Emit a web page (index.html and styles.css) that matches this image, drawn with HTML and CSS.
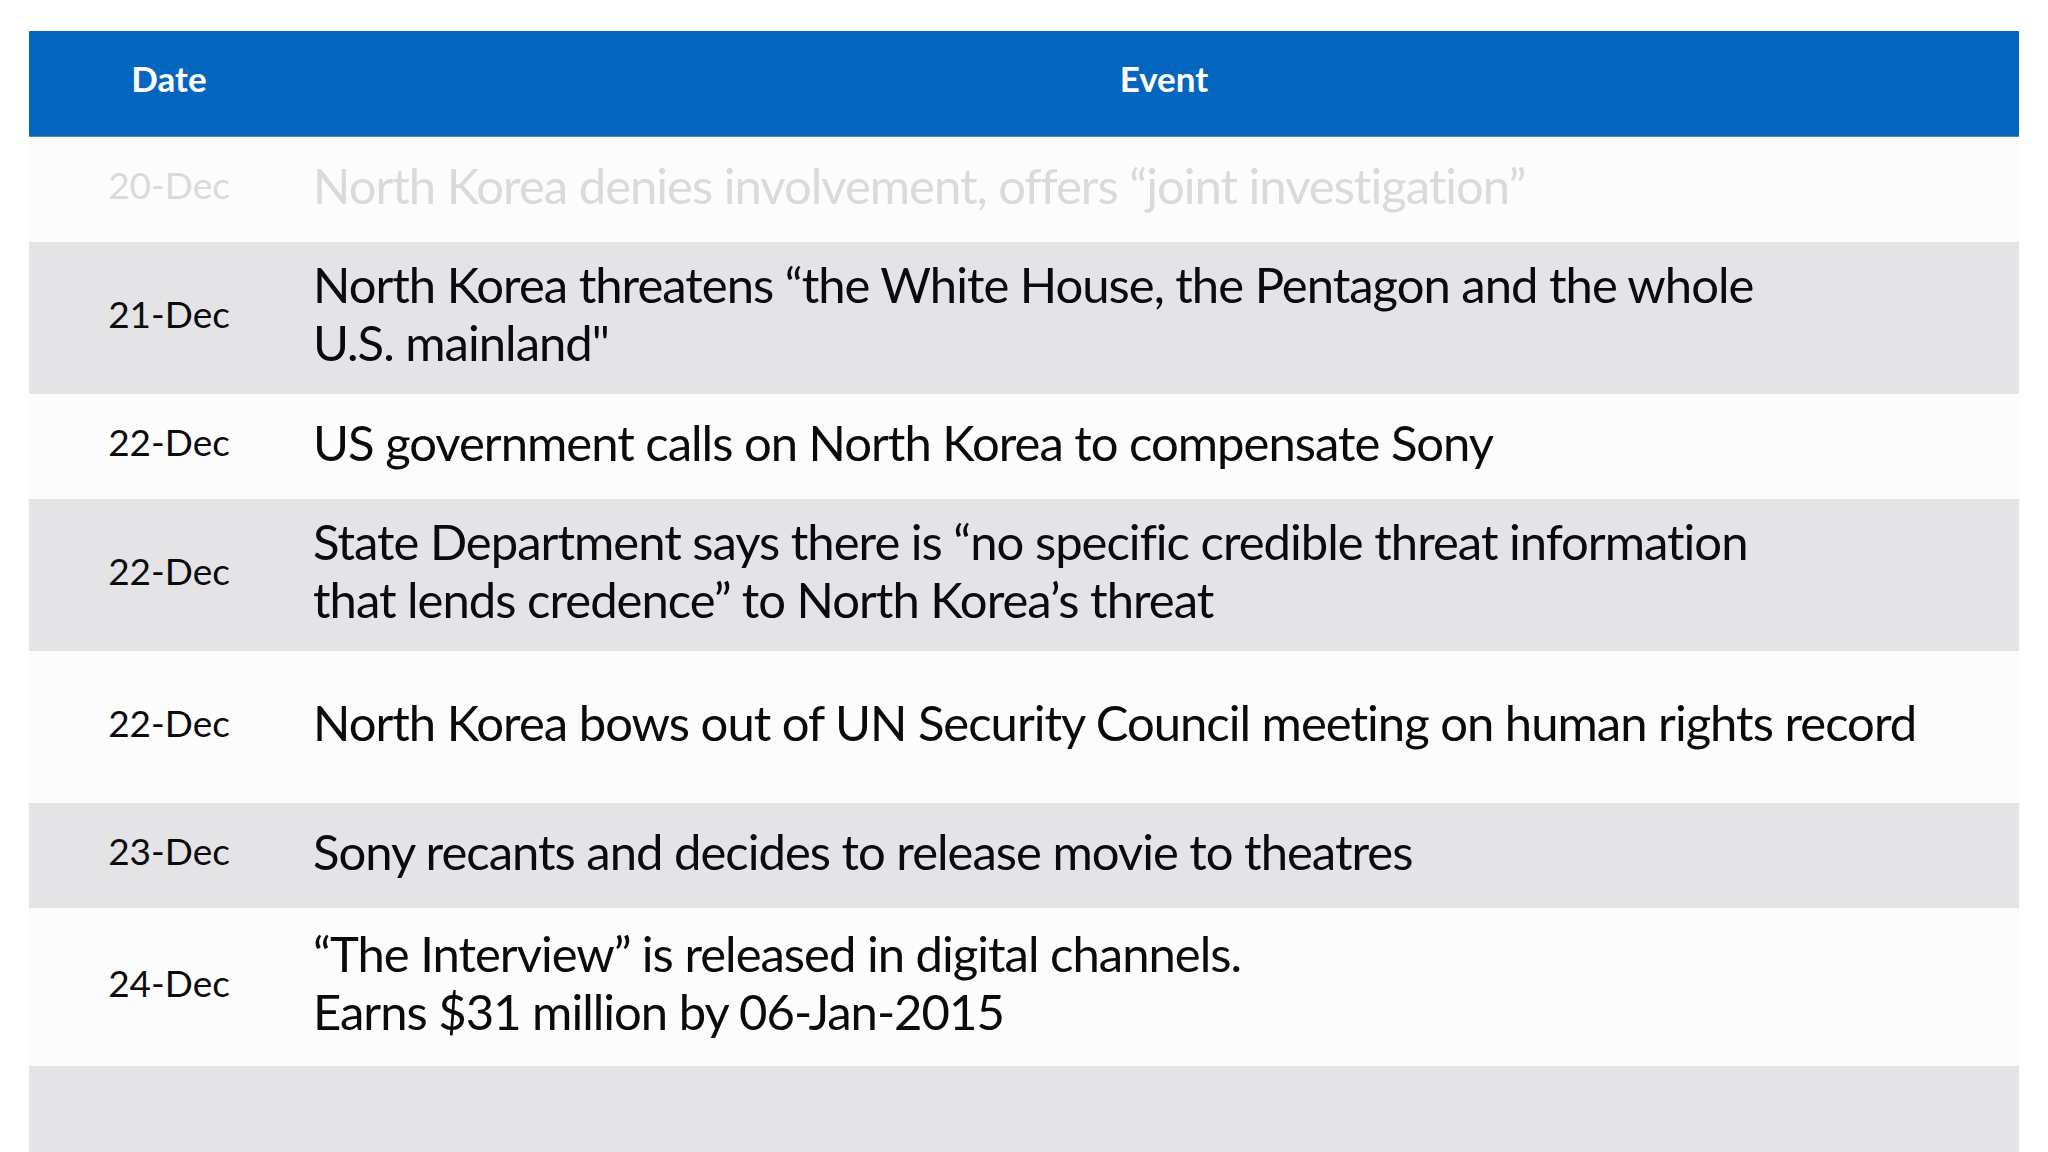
FILE: index.html
```html
<!DOCTYPE html>
<html lang="en">
<head>
<meta charset="utf-8">
<title>Timeline</title>
<link rel="stylesheet" href="styles.css">
</head>
<body>
<div class="table">
  <div class="row head">
    <div class="cell date">Date</div>
    <div class="cell event center">Event</div>
  </div>
  <div class="row short light faded">
    <div class="cell date">20-Dec</div>
    <div class="cell event">North Korea denies involvement, offers “joint investigation”</div>
  </div>
  <div class="row tall gray">
    <div class="cell date">21-Dec</div>
    <div class="cell event">North Korea threatens “the White House, the Pentagon and the whole<br>U.S. mainland"</div>
  </div>
  <div class="row short light">
    <div class="cell date">22-Dec</div>
    <div class="cell event">US government calls on North Korea to compensate Sony</div>
  </div>
  <div class="row tall gray">
    <div class="cell date">22-Dec</div>
    <div class="cell event">State Department says there is “no specific credible threat information<br>that lends credence” to North Korea’s threat</div>
  </div>
  <div class="row tall light">
    <div class="cell date">22-Dec</div>
    <div class="cell event">North Korea bows out of UN Security Council meeting on human rights record</div>
  </div>
  <div class="row short gray">
    <div class="cell date">23-Dec</div>
    <div class="cell event">Sony recants and decides to release movie to theatres</div>
  </div>
  <div class="row taller light">
    <div class="cell date">24-Dec</div>
    <div class="cell event">“The Interview” is released in digital channels.<br>Earns $31 million by 06-Jan-2015</div>
  </div>
  <div class="row tail gray"></div>
</div>
</body>
</html>
```

FILE: styles.css
```css
html, body {
  margin: 0;
  padding: 0;
  background: #ffffff;
  overflow: hidden;
}

body {
  font-family: Lato, "Noto Sans", "Liberation Sans", sans-serif;
  color: #0b0b0d;
}

.table {
  margin: 31px 0 0 29px;
  width: 1990px;
  display: flex;
  flex-direction: column;
}

.row {
  display: grid;
  grid-template-columns: 280px 1fr;
  align-items: center;
}

.row .cell {
  padding-bottom: 10px;
}

.head {
  height: 105px;
  background: #0566bf;
  border-bottom: 1px solid #3f8ad3;
  color: #ffffff;
  font-weight: 700;
  font-size: 35px;
}

.head .cell {
  padding-bottom: 12px;
}

.cell.date {
  text-align: center;
}

.row:not(.head) .cell.date {
  font-size: 37px;
}

.row:not(.head) .cell.event {
  font-size: 49px;
  letter-spacing: -1px;
  line-height: 58px;
  padding-left: 4px;
  white-space: nowrap;
}

.cell.center {
  text-align: center;
}

.short { height: 105px; }
.tall { height: 152px; }
.taller { height: 158px; }
.tail { height: 120px; }

.light { background: #fcfcfd; }
.gray { background: #e4e4e7; }

.faded { color: #dadadd; }
```
